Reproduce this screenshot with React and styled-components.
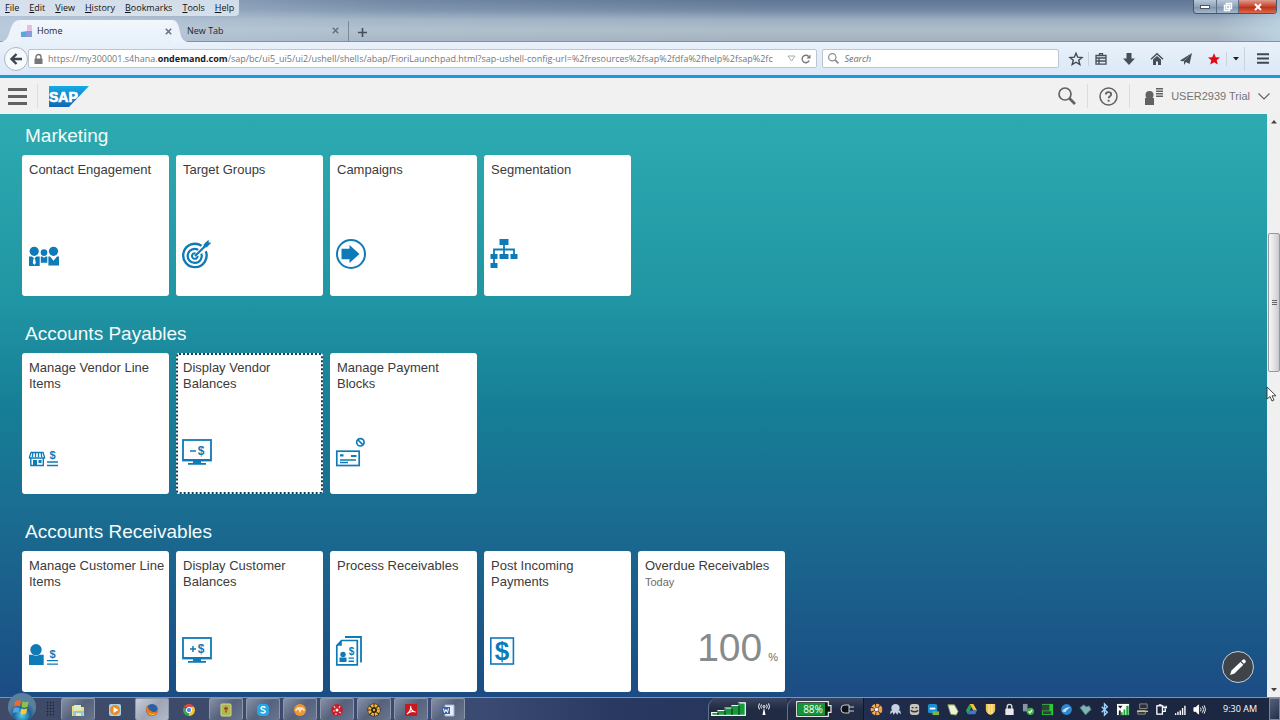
import React from 'react';
import styled, { createGlobalStyle, css } from 'styled-components';

const BLUE = '#0f7ab8';
const ui = `'Liberation Sans', Arial, sans-serif`;
const chromeFont = `'Open Sans', 'Noto Sans', sans-serif`;

const Global = createGlobalStyle`
  *, *::before, *::after { box-sizing: border-box; }
  body { margin: 0; font-family: ${ui}; }
  button { font: inherit; color: inherit; background: none; border: 0; padding: 0; margin: 0; cursor: pointer; }
  svg { display: block; flex: none; overflow: visible; }
`;

const Page = styled.div`
  display: flex;
  flex-direction: column;
  height: 100vh;
  overflow: hidden;
  position: relative;
`;

/* ---------- browser window ---------- */

const Glass = styled.div`
  font-family: ${chromeFont};
  font-size: 9px;
  line-height: 14px;
  color: #111;
  background:
    linear-gradient(90deg, rgba(190, 208, 226, 0.75) 0, rgba(190, 208, 226, 0.2) 30%, transparent 60%, transparent 95%, rgba(200, 225, 240, 0.6) 100%),
    linear-gradient(180deg, #5f7695 0, #7288a4 10px, #9fb0c2 20px, #aebdc9 30px, #a2b0be 42px);
`;

const MenuRow = styled.div`
  display: flex;
  justify-content: space-between;
  align-items: flex-start;
  height: 20px;
`;

const MenuBar = styled.nav`
  display: flex;
  gap: 10px;
  padding: 1px 5px;
  height: 16px;
  background: rgba(222, 231, 241, 0.85);
  border-bottom-right-radius: 4px;
`;

const MenuItem = styled.button`
  line-height: 14px;
  &::first-letter { text-decoration: underline; }
`;

const WindowButtons = styled.div`
  display: flex;
  height: 14px;
  margin-right: 3px;
  border: 1px solid #45556b;
  border-top: 0;
  border-radius: 0 0 4px 4px;
  overflow: hidden;
`;

const WindowButton = styled.button`
  display: grid;
  place-items: center;
  width: ${(p) => (p.$close ? 38 : 22)}px;
  background: ${(p) =>
    p.$close
      ? 'linear-gradient(#dd9c8e, #c8402a 50%, #b9301b 55%, #dc6a4b)'
      : 'linear-gradient(#b9c8d8, #8fa3ba 50%, #7f94ae 55%, #a4b7cb)'};
  & + & { border-left: 1px solid #5c6d84; }
`;

const Tabs = styled.div`
  display: flex;
  align-items: stretch;
  height: 22px;
  border-bottom: 1px solid #84919e;
`;

const Tab = styled.div`
  display: flex;
  align-items: center;
  width: ${(p) => (p.$active ? 152 : 162)}px;
  gap: 5px;
  color: #1c242c;
  ${(p) =>
    p.$active &&
    css`
      background: linear-gradient(#f2f7fc, #e8f0fa);
      margin-bottom: -1px;
    `}
`;

const TabLabel = styled.button`
  flex: 1;
  text-align: left;
`;

const TabClose = styled.button`
  margin-right: ${(p) => p.$space || 0}px;
`;

const Divider = styled.span`
  width: 1px;
  height: ${(p) => p.$h}px;
  background: ${(p) => p.$c || '#c9d3df'};
  flex: none;
`;

const IconButton = styled.button`
  display: grid;
  place-items: center;
  flex: none;
  width: ${(p) => p.$w || 20}px;
  height: 24px;
`;

const NavBar = styled.div`
  display: flex;
  align-items: center;
  height: 33px;
  padding-left: 4px;
  background: linear-gradient(#e9f1fa, #dbe8f7);
  font-family: ${chromeFont};
  font-size: 9px;
  color: #72777c;
`;

const BackButton = styled.button`
  display: grid;
  place-items: center;
  width: 24px;
  height: 24px;
  flex: none;
  border: 1px solid #aab7c4;
  border-radius: 50%;
  background: #f7fafd;
`;

const Field = styled.label`
  display: flex;
  align-items: center;
  gap: 5px;
  height: 19px;
  min-width: 0;
  flex: ${(p) => p.$grow};
  padding: 0 5px;
  background: #fff;
  border: 1px solid #bcc6d0;
  border-radius: 2px;
  margin-right: 5px;
`;

const UrlArea = styled.span`
  display: grid;
  flex: 1;
  min-width: 0;
  overflow: hidden;
  > * { grid-area: 1 / 1; }
`;

const FieldInput = styled.input`
  min-width: 0;
  width: 100%;
  border: 0;
  outline: 0;
  padding: 0;
  background: transparent;
  font: italic 9px/14px ${chromeFont};
  color: #555;
  &::placeholder { color: #6c6c6c; opacity: 1; }
`;

const UrlText = styled.span`
  line-height: 14px;
  white-space: nowrap;
  overflow: hidden;
  pointer-events: none;
  b { color: #1b1b1b; }
`;

const Tools = styled.div`
  display: flex;
  align-items: center;
  gap: ${(p) => p.$gap || 0}px;
`;

/* ---------- launchpad ---------- */

const Shell = styled.header`
  display: flex;
  align-items: center;
  height: 39px;
  padding: 0 10px 0 8px;
  background: #f1f1f1;
  border-top: 3px solid #1a9bd9;
  color: #5f5f5f;
`;

const ShellButton = styled.button`
  display: flex;
  align-items: center;
  gap: 8px;
  font-size: 11px;
  line-height: 14px;
  color: #747474;
  padding: 0 ${(p) => p.$pad || 0}px;
`;

const UserButton = styled(ShellButton)`
  margin-left: 14px;
`;

const Spacer = styled.span`
  flex: 1;
`;

const Body = styled.div`
  display: flex;
  flex: 1;
  min-height: 0;
  position: relative;
`;

const Launchpad = styled.main`
  flex: 1;
  min-width: 0;
  overflow: hidden;
  display: flex;
  flex-direction: column;
  gap: 25px;
  padding: 9px 22px 0;
  background: linear-gradient(180deg, #2dabb1 0, #2095a3 32%, #167f97 50%, #1a6b90 70%, #1b4c84 100%);
`;

const Group = styled.section`
  display: flex;
  flex-direction: column;
  gap: 6px;
`;

const GroupTitle = styled.h2`
  margin: 0;
  padding-left: 3px;
  font-size: 19px;
  line-height: 26px;
  font-weight: 400;
  color: #f3fbfb;
`;

const TileRow = styled.div`
  display: flex;
  gap: 7px;
`;

const Tile = styled.a`
  display: flex;
  flex-direction: column;
  justify-content: space-between;
  width: 147px;
  height: 141px;
  padding: 7px 3px ${(p) => (p.$kpi ? 16 : 26)}px 7px;
  background: #fff;
  border-radius: 3px;
  color: #3b3b3b;
  font-size: 13px;
  line-height: 16px;
  text-decoration: none;
  ${(p) =>
    p.$focused &&
    css`
      outline: 2px dotted #12405c;
      outline-offset: -2px;
    `}
`;

const TileTitle = styled.span`
  display: block;
`;

const TileSub = styled.span`
  display: block;
  font-size: 11px;
  color: #6b6b6b;
`;

const Kpi = styled.span`
  display: flex;
  align-items: baseline;
  justify-content: flex-end;
  gap: 6px;
  padding-right: 4px;
  font-size: 39px;
  line-height: 38px;
  color: #868b8d;
`;

const KpiUnit = styled.span`
  font-size: 11px;
  color: #6b6b6b;
`;

const Scroll = styled.div`
  display: flex;
  flex-direction: column;
  align-items: stretch;
  width: 13px;
  background: #f0f0f1;
`;

const ScrollArrow = styled.button`
  display: grid;
  place-items: center;
  height: 15px;
`;

const Track = styled.div`
  flex: 1;
  display: grid;
  grid-template-rows: 104fr 139fr 310fr;
`;

const Thumb = styled.div`
  grid-row: 2;
  display: grid;
  place-items: center;
  margin-left: 1px;
  border: 1px solid #98989c;
  border-radius: 2px;
  background: linear-gradient(90deg, #f7f7f8, #e3e3e6 50%, #c9c9cf);
`;

const Cursor = styled.svg`
  position: absolute;
  right: 4px;
  top: 272px;
`;

const EditButton = styled.button`
  position: absolute;
  right: 26px;
  bottom: 14px;
  width: 32px;
  height: 32px;
  display: grid;
  place-items: center;
  border: 1px solid #c5d0d8;
  border-radius: 50%;
  background: #3f444a;
`;

/* ---------- taskbar ---------- */

const Taskbar = styled.footer`
  display: flex;
  align-items: stretch;
  height: 23px;
  flex: none;
  position: relative;
  border-top: 1px solid #8492ab;
  background: linear-gradient(90deg, #3f4a66 0, #3a4a72 38%, #2a3962 48%, #26345a 60%, #1b2540 78%, #1c2742 100%);
  color: #fff;
  font-family: ${chromeFont};
  font-size: 9px;
`;

const StartButton = styled.button`
  width: 43px;
  margin: -5px 0 0;
  display: grid;
  place-items: center;
`;

const Grip = styled.span`
  width: 8px;
  margin: 3px 7px 3px 3px;
  background: radial-gradient(circle, #1c2438 40%, transparent 50%) 0 0 / 3px 3px;
`;

const Apps = styled.div`
  display: flex;
  gap: 3px;
`;

const AppButton = styled.button`
  display: grid;
  place-items: center;
  width: 34px;
  border-radius: 2px;
  border: 1px solid ${(p) => (p.$plain ? 'transparent' : '#8d97ab')};
  border-bottom: 0;
  background: ${(p) =>
    p.$plain ? 'none' : p.$active ? 'linear-gradient(135deg, #c9ced8, #9da5b6 50%, #b3bac8)' : 'linear-gradient(135deg, #8690a6, #56617c 50%, #69748d)'};
`;

const TrayGroup = styled.div`
  display: flex;
  align-items: center;
  gap: ${(p) => p.$gap}px;
  padding: 0 ${(p) => p.$right}px 0 ${(p) => p.$left}px;
  border-left: 1px solid #67728a;
  border-top-left-radius: 9px;
  background: linear-gradient(#3b4560, #222b44 50%);
`;

const Tray = styled.div`
  display: flex;
  align-items: center;
  gap: 6px;
  padding: 0 17px 0 6px;
  border-left: 1px solid #10172b;
`;

const Clock = styled.time`
  padding-right: 12px;
  line-height: 21px;
  white-space: nowrap;
`;

const ShowDesktop = styled.button`
  width: 11px;
  border: 1px solid #7b869a;
  background: linear-gradient(135deg, #56627a, #222d48);
`;

/* ---------- icons ---------- */

const Dollar = ({ x, y, s }) => (
  <text x={x} y={y} fontSize={s} fontWeight="700" fontFamily="Liberation Sans, Arial, sans-serif" textAnchor="middle" fill={BLUE}>$</text>
);

const Monitor = ({ plus }) => (
  <>
    <rect x="0" y="4" width="28" height="20.5" fill="none" stroke={BLUE} strokeWidth="1.8" />
    <path d="M0 23h28v2H0zM10 25h8v2h-8zM5 27h18v1.700H5z" fill={BLUE} />
    <path d={plus ? 'M7 15h6M10 12v6' : 'M7 15h6'} stroke={BLUE} strokeWidth="1.500" />
    <Dollar x={18} y={19} s={12} />
  </>
);

const tileIcons = {
  people: (
    <g fill={BLUE}>
      <circle cx="5.200" cy="13.300" r="4.600" />
      <circle cx="15" cy="14.600" r="3.300" />
      <circle cx="24.500" cy="13.300" r="4.600" />
      <path d="M0 18.500h3l2.200 2 2.200-2H10.700V28H0zM11.800 18.500h1.400l1.800 1.300 1.800-1.300h1.500v6.200h-6.500zM19.400 18.500h1.600l3.500 4.200 3.500-4.200h2v9H19.400z" />
      <path d="M4.600 20.500h1.400l.8 4.500-1.500 2-1.500-2z" fill="#fff" />
    </g>
  ),
  target: (
    <g fill="none" stroke={BLUE}>
      <path d="M18.500 7.800A11.700 11.700 0 1 0 22.800 13.200" strokeWidth="2.400" />
      <path d="M15.200 11.900A7 7 0 1 0 18.300 15.600" strokeWidth="2.200" />
      <path d="M12.500 15.300A2.800 2.800 0 1 0 14.600 17.800" strokeWidth="2" />
      <path d="M12 18L23 7.200" strokeWidth="2.200" />
      <path d="M20.500 9.500L20.800 6.300 25.500 1.800 25.800 4.400 28.300 4.800 23.800 9.300z" fill={BLUE} stroke="none" />
    </g>
  ),
  campaign: (
    <g>
      <circle cx="14" cy="16" r="14" fill="none" stroke={BLUE} strokeWidth="2" />
      <path d="M4.500 10.800h8V7l10 9-10 9v-3.800h-8z" fill={BLUE} />
    </g>
  ),
  segments: (
    <g>
      <path d="M8.500 1h9v6h-9zM-.5 16h7v5h-7zM8.500 16h9v5h-9zM19.500 16h7v5h-7zM-.5 25h7v5h-7z" fill={BLUE} />
      <path d="M13 6v11M3 26V11.500h20V17" fill="none" stroke={BLUE} strokeWidth="1.800" />
    </g>
  ),
  vendor: (
    <g>
      <path d="M2 16.500h12l1.500 4.500v1h-15v-1z" fill="none" stroke={BLUE} strokeWidth="1.300" />
      <path d="M3.800 17l-.5 4M6.500 17v4M9.500 17v4M12.200 17l.5 4" stroke={BLUE} strokeWidth="1.300" />
      <path d="M1.800 22v7.500h12.500V22" fill="none" stroke={BLUE} strokeWidth="1.400" />
      <path d="M4 24h4v5.500H4zM9.500 24h3v3h-3z" fill={BLUE} />
      <Dollar x={23.500} y={23} s={11} />
      <path d="M18 26h11M18 29.500h11" stroke={BLUE} strokeWidth="1.500" />
    </g>
  ),
  minus: <Monitor />,
  plus: <Monitor plus />,
  block: (
    <g fill="none" stroke={BLUE}>
      <rect x="-.2" y="15.200" width="22.400" height="14.300" strokeWidth="1.700" />
      <path d="M3 19.300h3.500M14 20h5.500" strokeWidth="2.200" />
      <path d="M3 24h16M3 26.500h8" strokeWidth="1.400" />
      <circle cx="23.400" cy="6.300" r="3.700" strokeWidth="1.700" />
      <path d="M21 4l4.800 4.600" strokeWidth="1.700" />
    </g>
  ),
  customer: (
    <g fill={BLUE}>
      <circle cx="7" cy="15.800" r="5.700" />
      <path d="M0 20.800h3.500Q7 23 10.500 20.800h4.200V31H0z" />
      <Dollar x={23.500} y={24} s={11} />
      <path d="M18 26h11v1.300H18zM18 29.400h11v1.300H18z" />
    </g>
  ),
  docs: (
    <g fill="none" stroke={BLUE}>
      <path d="M4.500 6.500H20.300V30.800H-.2V11.500z" strokeWidth="1.700" />
      <path d="M-.2 11.800h5V6.500z" fill={BLUE} stroke="none" />
      <path d="M8 3h16v25.500" strokeWidth="1.800" />
      <circle cx="6" cy="20.500" r="2.700" fill={BLUE} stroke="none" />
      <path d="M2.500 23.500h7V28h-7zM11.500 23.500h5.500v1.200h-5.500zM11.500 26.500h5.500V28h-5.500z" fill={BLUE} stroke="none" />
      <g stroke="none"><Dollar x={14.500} y={21} s={10} /></g>
    </g>
  ),
  payment: (
    <g>
      <rect x="-.2" y="4" width="22.600" height="26" fill="none" stroke={BLUE} strokeWidth="1.600" />
      <Dollar x={11} y={26} s={26} />
    </g>
  ),
};

const groups = [
  {
    title: 'Marketing',
    tiles: [
      { title: 'Contact Engagement', icon: 'people' },
      { title: 'Target Groups', icon: 'target' },
      { title: 'Campaigns', icon: 'campaign' },
      { title: 'Segmentation', icon: 'segments' },
    ],
  },
  {
    title: 'Accounts Payables',
    tiles: [
      { title: 'Manage Vendor Line Items', icon: 'vendor' },
      { title: 'Display Vendor Balances', icon: 'minus', focused: true },
      { title: 'Manage Payment Blocks', icon: 'block' },
    ],
  },
  {
    title: 'Accounts Receivables',
    tiles: [
      { title: 'Manage Customer Line Items', icon: 'customer' },
      { title: 'Display Customer Balances', icon: 'plus' },
      { title: 'Process Receivables', icon: 'docs' },
      { title: 'Post Incoming Payments', icon: 'payment' },
      { title: 'Overdue Receivables', sub: 'Today', value: '100', unit: '%' },
    ],
  },
];

const Star = ({ fill, stroke, w }) => (
  <svg width="14" height="14" viewBox="0 0 14 14">
    <path d="M7 1.200l1.700 4 4.300.3-3.300 2.800 1.100 4.200L7 10.200l-3.800 2.300 1.100-4.200L1 5.500l4.300-.3z" fill={fill} stroke={stroke} strokeWidth={w} />
  </svg>
);

const Magnifier = ({ size, color, w }) => (
  <svg width={size} height={size} viewBox="0 0 18 18" fill="none" stroke={color}>
    <circle cx="7" cy="7" r="6" strokeWidth={w} />
    <path d="M11.300 11.300L17 17" strokeWidth={w + 1} />
  </svg>
);

const appIcons = [
  { name: 'Explorer', el: <g><path d="M1 3h5l1 1h6v9H1z" fill="#f1dc8a" /><path d="M3 2h7v5H3z" fill="#d7efc6" /><path d="M2 8h11l-1 5H2z" fill="#8cc7e6" /><path d="M5 10h5v3H5z" fill="#f5e6a5" /></g> },
  { name: 'Media Player', plain: true, el: <g><rect x="1" y="1" width="12" height="12" rx="2" fill="#a9d0ea" /><circle cx="7" cy="7" r="5" fill="#ee8a1c" /><path d="M5.500 4v6l5-3z" fill="#fff" /></g> },
  { name: 'Firefox', active: true, el: <g><circle cx="7" cy="7" r="6" fill="#2b5fa5" /><path d="M1.500 3C0 9 3 13 7 13s7-4 6-8c-1 3-2 4-4 4-3 0-3-2-5-2 0-2-1-3-2.500-4z" fill="#e8741c" /><path d="M3 8c1 3 5 4 8 2-2 3-7 3-8-2z" fill="#f9c440" /></g> },
  { name: 'Chrome', plain: true, el: <g><path d="M7 7V1.500L12.200 4A6 6 0 0 1 7 13z" fill="#f6c532" /><path d="M1.800 4L7 7v6A6 6 0 0 1 1.800 4z" fill="#3fa552" /><path d="M1.800 4A6 6 0 0 1 12.200 4H7z" fill="#dd4b3e" /><circle cx="7" cy="7" r="2.700" fill="#4a8cf0" stroke="#fff" /></g> },
  { name: 'Notes', el: <g><rect x="2" y="1" width="10" height="12" rx="1" fill="#a8bc4e" stroke="#e0d48a" /><path d="M7 3.500v6M5 5.500h4" stroke="#a03a22" strokeWidth="1.300" /></g> },
  { name: 'Skype', el: <g><rect x="1" y="1" width="12" height="12" rx="4" fill="#22a9e6" /><path d="M9.300 4.800C8.500 3.400 5 3.500 5 5.300c0 2 4.300 1.200 4.300 3.300C9.300 10.500 5.600 10.500 4.800 9" fill="none" stroke="#fff" strokeWidth="1.500" /></g> },
  { name: 'Messenger', el: <g><circle cx="7" cy="7" r="6" fill="#ef9634" /><path d="M3 8c0-3 3-3 4 0 1-3 4-3 4 0M4 5h6" fill="none" stroke="#fbe5c5" strokeWidth="1.500" /></g> },
  { name: 'Recorder', el: <g><circle cx="7" cy="7" r="6" fill="#c5202e" /><circle cx="7" cy="7" r="1.500" fill="#fff" /><path d="M4 3l1 2M10 3L9 5M3 8h2M9 9l2 1M6 10v2" stroke="#f4c3c3" strokeWidth="1.200" /></g> },
  { name: 'Meeting', el: <g fill="none"><circle cx="7" cy="7" r="6.500" fill="#2a2118" /><circle cx="7" cy="7" r="4.500" stroke="#f2b632" strokeWidth="3" strokeDasharray="2.600 .93" /><circle cx="7" cy="7" r="1.200" fill="#f2b632" /></g> },
  { name: 'PDF Reader', el: <g><rect x="1" y="1" width="12" height="12" fill="#c9181e" /><path d="M3 11c3-2 4-5 3.700-8C6 6 9 9 11.500 9 9 7.800 5 9 3 11z" fill="none" stroke="#fff" strokeWidth="1.100" /></g> },
  { name: 'Word', el: <g><path d="M4 2h9v11H4z" fill="#e8eef8" stroke="#9db3d6" /><path d="M1 4h8v7H1z" fill="#3c63a8" /><path d="M2.500 5.500l1 4 1.500-3 1.500 3 1-4" fill="none" stroke="#fff" /></g> },
];

const trayIcons = [
  ['Meetings', <g fill="none"><circle cx="7" cy="7" r="4.300" stroke="#f3a85a" strokeWidth="4" strokeDasharray="3 .86" /><circle cx="7" cy="7" r="1.800" fill="#fff" /></g>],
  ['Agent', <g fill="#c7d2e2"><circle cx="7" cy="5.500" r="4.500" /><path d="M2 8l-1 4 3-2 1 3 2-3 2 3 1-3 3 2-1-4z" /></g>],
  ['Penguin', <g><rect x="2" y="1" width="10" height="12" rx="3" fill="#c6c2bd" /><path d="M4 5h2M8 5h2M3 8q4 3 8 0" stroke="#3a3634" strokeWidth="1.500" fill="none" /></g>],
  ['Remote', <g><rect x="1" y="1" width="10" height="10" rx="2" fill="#1c8fd2" /><path d="M3 6h6" stroke="#fff" strokeWidth="2" /><path d="M6 9h7v4H6z" fill="#7ab648" /></g>],
  ['Note', <path d="M2 2l7 0 4 7-2 4-6-1z" fill="#eef3d8" stroke="#89a35a" />],
  ['Drive', <g><path d="M5 1h4l4 7H9z" fill="#f4c430" /><path d="M5 1l2 3.500L3 12 1 8z" fill="#2da05c" /><path d="M5 8h8l-2 4H3z" fill="#3b78d8" /></g>],
  ['Shield', <g><path d="M2 1h10v6q0 4-5 6-5-2-5-6z" fill="#f0c75b" /><path d="M5.500 1v11M8.500 1v11" stroke="#fff3c9" strokeWidth="1" /></g>],
  ['Lock', <g><path d="M4.500 7V4a2.500 2.500 0 0 1 5 0v3" fill="none" stroke="#d9d9d9" strokeWidth="1.500" /><rect x="2.500" y="6" width="9" height="7" rx="1" fill="#e8e8e8" /></g>],
  ['USB', <g><rect x="1" y="1" width="5" height="8" fill="#8894a5" /><circle cx="9" cy="9" r="4" fill="#3eae49" /><path d="M7 9l1.500 1.500L11 7.500" stroke="#fff" fill="none" strokeWidth="1.300" /></g>],
  ['Computer', <g><path d="M1 1h12v12H1z" fill="#2bc63b" /><path d="M1 2h8v6H1zM2 9h9v3H2z" fill="#33403b" /></g>],
  ['Globe', <g><circle cx="7" cy="7" r="5.800" fill="#2d86cf" /><path d="M2 9q5-6 10-4-4 0-6 5z" fill="#bfe2f7" /></g>],
  ['Handshake', <path d="M1 5l4-3 3 2 3-1 2 4-6 6z" fill="#7fb5b5" stroke="#4a6a70" />],
  ['Bluetooth', <path d="M4 4l6 6-3 3V1l3 3-6 6" fill="none" stroke="#9fd4ff" strokeWidth="1.500" />],
  ['Cellular', <g><path d="M0 1h13v12H0z" fill="#fff" /><path d="M4 13v-3h2v3zM7 13V7h2v6zM10 13V3h2.500v10z" fill="#18a334" /><path d="M1 3h5L3.500 6zM2 8h2v5H2z" fill="#1b1b1b" /></g>],
  ['Network', <g><path d="M4 1h8v5H4zM2 8h8v4H2z" fill="#2b3038" stroke="#8b929c" /><path d="M1 9h12" stroke="#e3c13a" strokeWidth="1.500" /></g>],
  ['Power', <g fill="none" stroke="#fff" strokeWidth="1.400"><rect x="2" y="3" width="6" height="9" /><path d="M4 2h3M9 5h4M9.500 3v2M12 3v2M11 6v3H8" /></g>],
  ['Signal', <path d="M1 13v-2h1.500v2zM3.500 13V9.500H5V13zM6 13V8h1.500v5zM8.500 13V5.500H10V13zM11 13V3h1.500v10z" fill="#fff" />],
  ['Volume', <g fill="none" stroke="#fff"><path d="M1 5h2l3-3v10L3 9H1z" fill="#fff" /><path d="M8 5q1.500 2 0 4M10 3.500q3 3.500 0 7M12 2.500q3 4.500 0 9" /></g>],
];

const CloseX = () => (
  <svg width="7" height="7" viewBox="0 0 7 7"><path d="M.8.800l5.400 5.400M6.200.800L.8 6.200" stroke="#6a737d" strokeWidth="1.600" /></svg>
);

function Browser() {
  return (
    <>
      <Glass>
        <MenuRow>
          <MenuBar aria-label="Menu">
            {['File', 'Edit', 'View', 'History', 'Bookmarks', 'Tools', 'Help'].map((m) => (
              <MenuItem key={m}>{m}</MenuItem>
            ))}
          </MenuBar>
          <WindowButtons>
            <WindowButton aria-label="Minimize"><svg width="10" height="4"><rect x=".5" y=".5" width="9" height="3" fill="#fff" stroke="#4b5868" /></svg></WindowButton>
            <WindowButton aria-label="Restore"><svg width="10" height="10"><path d="M3.500 1.500h5v5h-5zM1.500 3.500h5v5h-5z" fill="none" stroke="#fff" strokeWidth="1.500" /></svg></WindowButton>
            <WindowButton aria-label="Close" $close><svg width="8" height="8"><path d="M1 1l6 6M7 1L1 7" stroke="#fff" strokeWidth="2" /></svg></WindowButton>
          </WindowButtons>
        </MenuRow>
        <Tabs>
          <svg width="20" height="22" viewBox="0 0 20 22"><path d="M0 22C13 22 7 0 20 0V22z" fill="#edf3fb" /></svg>
          <Tab $active>
            <svg width="12" height="12" viewBox="0 0 12 12"><path d="M1 7l6-1V0h5v12H1z" fill="#8b9be0" /><path d="M7 0h5v6H7z" fill="#e6bfe0" /><path d="M1 7h5v5H1z" fill="#5aa6dc" /></svg>
            <TabLabel>Home</TabLabel>
            <TabClose aria-label="Close Home"><CloseX /></TabClose>
          </Tab>
          <svg width="15" height="22" viewBox="0 0 15 22"><path d="M0 0C11 0 4 22 17 22H0z" fill="#edf3fb" /></svg>
          <Tab>
            <TabLabel>New Tab</TabLabel>
            <TabClose aria-label="Close New Tab" $space={4}><CloseX /></TabClose>
            <Divider $h={20} $c="#7d8b99" />
          </Tab>
          <IconButton $w={26} aria-label="Open a new tab">
            <svg width="9" height="9"><path d="M4.500 0v9M0 4.500h9" stroke="#454f5a" strokeWidth="1.600" /></svg>
          </IconButton>
        </Tabs>
      </Glass>
      <NavBar>
        <BackButton aria-label="Back">
          <svg width="12" height="12" viewBox="0 0 12 12"><path d="M6.500 1L1.500 6l5 5M2 6h10" fill="none" stroke="#3d454e" strokeWidth="2.400" /></svg>
        </BackButton>
        <Field $grow="796 1 0">
          <svg width="9" height="10" viewBox="0 0 9 10"><path d="M2 5V3a2.500 2.500 0 0 1 5 0v2" fill="none" stroke="#777" strokeWidth="1.400" /><rect x=".5" y="4.500" width="8" height="5.500" rx=".5" fill="#777" /></svg>
          <UrlArea>
            <FieldInput aria-label="Address" />
            <UrlText>
              https://my300001.s4hana.<b>ondemand.com</b>/sap/bc/ui5_ui5/ui2/ushell/shells/abap/FioriLaunchpad.html?sap-ushell-config-url=%2fresources%2fsap%2fdfa%2fhelp%2fsap%2fc
            </UrlText>
          </UrlArea>
          <svg width="9" height="7" viewBox="0 0 9 7"><path d="M1 1h7L4.500 6z" fill="none" stroke="#a8adb3" /></svg>
          <svg width="10" height="10" viewBox="0 0 10 10"><path d="M8.200 6.500A3.700 3.700 0 1 1 7.600 2.500" fill="none" stroke="#777" strokeWidth="1.400" /><path d="M9.500.5v4h-4z" fill="#777" /></svg>
        </Field>
        <Field $grow="230 1 0">
          <Magnifier size={11} color="#8a8f94" w={2} />
          <FieldInput placeholder="Search" aria-label="Search" />
        </Field>
        <Tools>
          <IconButton $w={24} aria-label="Bookmark this page"><Star fill="none" stroke="#3f4954" w={1.4} /></IconButton>
          <Divider $h={14} />
          <IconButton $w={23} aria-label="Bookmarks list">
            <svg width="12" height="12" viewBox="0 0 12 12"><path d="M1 2.500h10v8.700H1zM4.500 2.500V.7h3v1.800M1 5h10M1 8h10M4 5v6" fill="none" stroke="#454f5a" strokeWidth="1.300" /></svg>
          </IconButton>
          <IconButton $w={33} aria-label="Downloads">
            <svg width="12" height="12" viewBox="0 0 12 12"><path d="M3.500 0h5v5.500H12L6 12 0 5.500h3.500z" fill="#454f5a" /></svg>
          </IconButton>
          <IconButton $w={24} aria-label="Home page">
            <svg width="12" height="12" viewBox="0 0 12 12"><path d="M0 6.200L6 .8l6 5.400" fill="none" stroke="#454f5a" strokeWidth="1.500" /><path d="M2 6.500L6 3l4 3.500V12H7V8.500H5V12H2z" fill="#454f5a" /></svg>
          </IconButton>
          <IconButton $w={33} aria-label="Share">
            <svg width="12" height="12" viewBox="0 0 12 12"><path d="M12 0L9.500 11 6 9l-2 3V8z M12 0L0 7.500l3 1z" fill="#454f5a" /></svg>
          </IconButton>
          <IconButton $w={24} aria-label="Favourites"><Star fill="#e30613" stroke="none" w={0} /></IconButton>
          <Divider $h={14} />
          <IconButton $w={17} aria-label="More"><svg width="6" height="4"><path d="M0 0h6L3 3.500z" fill="#222" /></svg></IconButton>
          <Divider $h={24} />
          <IconButton $w={35} aria-label="Open menu">
            <svg width="12" height="11"><path d="M0 1.200h12M0 5.500h12M0 9.800h12" stroke="#3f4954" strokeWidth="2" /></svg>
          </IconButton>
        </Tools>
      </NavBar>
    </>
  );
}

function ShellHeader() {
  return (
    <Shell>
      <Tools $gap={10}>
        <ShellButton aria-label="Menu">
          <svg width="19" height="17"><path d="M0 1.500h19M0 8.500h19M0 15.500h19" stroke="#626262" strokeWidth="3" /></svg>
        </ShellButton>
        <Divider $h={24} $c="#dcdcdc" />
        <svg width="40" height="21" viewBox="0 0 40 21" role="img" aria-label="SAP">
          <defs><linearGradient id="sapFill" x2="0" y2="1"><stop offset="0" stopColor="#14abe6" /><stop offset="1" stopColor="#1466b4" /></linearGradient></defs>
          <path d="M1 0h40L21 21H1z" fill="url(#sapFill)" />
          <text x="1" y="16" fontSize="14" fontWeight="700" fill="#fff" stroke="#fff" strokeWidth=".7" fontFamily="Liberation Sans, Arial, sans-serif">SAP</text>
        </svg>
      </Tools>
      <Spacer />
      <ShellButton $pad={11} aria-label="Search"><Magnifier size={18} color="#626262" w={1.700} /></ShellButton>
      <Divider $h={24} $c="#dcdcdc" />
      <ShellButton $pad={11} aria-label="Help">
        <svg width="19" height="19" viewBox="0 0 19 19" fill="none" stroke="#626262">
          <circle cx="9.500" cy="9.500" r="8.500" strokeWidth="1.500" />
          <path d="M6.800 7.600C6.800 4.200 12.200 4.400 12.200 7.400 12.200 9.200 9.600 9.300 9.600 11.300" strokeWidth="1.800" />
          <path d="M9.600 12.800v1.900" strokeWidth="1.900" />
        </svg>
      </ShellButton>
      <Divider $h={24} $c="#dcdcdc" />
      <UserButton>
        <svg width="19" height="19" viewBox="0 0 19 19" fill="#626262">
          <circle cx="5.500" cy="8" r="4" /><path d="M1 11h9v7H1z" />
          <path d="M12 1h7v1.400h-7zM12 3.500h7v1.400h-7zM12 6h7v1.400h-7zM12 8.500h7v1.400h-7z" />
        </svg>
        USER2939 Trial
        <svg width="12" height="7" viewBox="0 0 12 7"><path d="M.5.5L6 6 11.500.5" fill="none" stroke="#626262" strokeWidth="1.200" /></svg>
      </UserButton>
    </Shell>
  );
}

function Launch() {
  return (
    <Body>
      <Launchpad>
        {groups.map((g) => (
          <Group key={g.title}>
            <GroupTitle>{g.title}</GroupTitle>
            <TileRow>
              {g.tiles.map((t) => (
                <Tile key={t.title} href="#" $focused={t.focused} $kpi={Boolean(t.value)}>
                  <span>
                    <TileTitle>{t.title}</TileTitle>
                    {t.sub && <TileSub>{t.sub}</TileSub>}
                  </span>
                  {t.icon ? (
                    <svg width="32" height="32" viewBox="0 0 32 32">{tileIcons[t.icon]}</svg>
                  ) : (
                    <Kpi>{t.value}<KpiUnit>{t.unit}</KpiUnit></Kpi>
                  )}
                </Tile>
              ))}
            </TileRow>
          </Group>
        ))}
      </Launchpad>
      <Scroll>
        <ScrollArrow aria-label="Scroll up"><svg width="6" height="4"><path d="M0 3.500h6L3 0z" fill="#444" /></svg></ScrollArrow>
        <Track>
          <Thumb><svg width="5" height="6"><path d="M0 .5h5M0 2.500h5M0 4.500h5" stroke="#666" /></svg></Thumb>
        </Track>
        <ScrollArrow aria-label="Scroll down"><svg width="6" height="4"><path d="M0 0h6L3 3.500z" fill="#444" /></svg></ScrollArrow>
      </Scroll>
      <EditButton aria-label="Edit home page">
        <svg width="18" height="18" viewBox="0 0 18 18" fill="#fff"><path d="M2.500 12.500L11.500 4l2.800 2.800L5.500 15.500 1 17z" /><path d="M12.300 3.200l1.400-1.400q1.300-1 2.500.1 1.200 1.200.2 2.500L15 5.800z" /></svg>
      </EditButton>
      <Cursor width="10" height="16" viewBox="0 0 10 16"><path d="M1 1v12l3-2.500 2 4.500 2-1-2-4.200h4z" fill="#fff" stroke="#333" strokeWidth=".9" /></Cursor>
    </Body>
  );
}

function WindowsTaskbar() {
  return (
    <Taskbar>
      <StartButton aria-label="Start">
        <svg width="28" height="28" viewBox="0 0 28 28">
          <defs><radialGradient id="orb" cy=".8"><stop offset="0" stopColor="#4ad1f2" /><stop offset=".6" stopColor="#235f94" /><stop offset="1" stopColor="#5b7f9e" /></radialGradient></defs>
          <circle cx="14" cy="14" r="14" fill="url(#orb)" />
          <path d="M7 8.500q3-2 6-.5l-1 5.500q-3-1.500-6 .3z" fill="#ee6a2c" />
          <path d="M14.500 8.500q3 1.500 6-.3l-1 5.500q-3 1.800-6 .3z" fill="#8cc63e" />
          <path d="M5.700 15.300q3-1.800 6-.3l-1 5q-3-1.500-6 .3z" fill="#4aa8e6" />
          <path d="M13.200 15.500q3 1.500 6-.3l-1 5.300q-3 1.800-6 .3z" fill="#fbc92f" />
        </svg>
      </StartButton>
      <Grip />
      <Apps>
        {appIcons.map((a) => (
          <AppButton key={a.name} aria-label={a.name} $plain={a.plain} $active={a.active}>
            <svg width="14" height="14" viewBox="0 0 14 14">{a.el}</svg>
          </AppButton>
        ))}
      </Apps>
      <Spacer />
      <TrayGroup $gap={12} $left={2} $right={17}>
        <svg width="35" height="14" viewBox="0 0 35 14"><path d="M.7 13.300V10.500H7V8.500H14V6H21V3.500H28V.8H34.300V13.300z" fill="#159a3c" stroke="#fff" strokeWidth="1.200" /><path d="M7 9v4M14 6v7M21 4v9M28 1v12" stroke="#0b3d1a" strokeWidth="1.200" /></svg>
        <svg width="12" height="12" viewBox="0 0 12 12" fill="none" stroke="#fff"><path d="M6 4l-1.500 8h3z" fill="#fff" stroke="none" /><circle cx="6" cy="3.500" r="1" /><path d="M3.500 1.500q-1.500 2 0 4M1.500.500q-2 3 0 6M8.500 1.500q1.500 2 0 4M10.500.500q2 3 0 6" /></svg>
      </TrayGroup>
      <TrayGroup $gap={8} $left={8} $right={9}>
        <svg width="36" height="16" viewBox="0 0 36 16">
          <path d="M.7.700h31.600v4H35v6.600h-2.700v4H.7z" fill="#0b1a10" stroke="#e8e8e8" strokeWidth="1.200" />
          <rect x="2" y="2" width="27" height="12" fill="#149338" />
          <text x="17" y="12" fontSize="10" textAnchor="middle" fill="#fff" fontFamily="Open Sans, sans-serif">88%</text>
        </svg>
        <svg width="14" height="10" viewBox="0 0 14 10"><path d="M9 1H4.500Q1 1 1 5t3.500 4H9zM9 3h5M9 7h5" fill="#111" stroke="#c9ced6" strokeWidth="1" /></svg>
      </TrayGroup>
      <Tray>
        {trayIcons.map(([name, el]) => (
          <svg key={name} width="13" height="13" viewBox="0 0 14 14" role="img" aria-label={name}>{el}</svg>
        ))}
      </Tray>
      <Clock>9:30 AM</Clock>
      <ShowDesktop aria-label="Show desktop" />
    </Taskbar>
  );
}

export default function App() {
  return (
    <Page>
      <Global />
      <Browser />
      <ShellHeader />
      <Launch />
      <WindowsTaskbar />
    </Page>
  );
}
